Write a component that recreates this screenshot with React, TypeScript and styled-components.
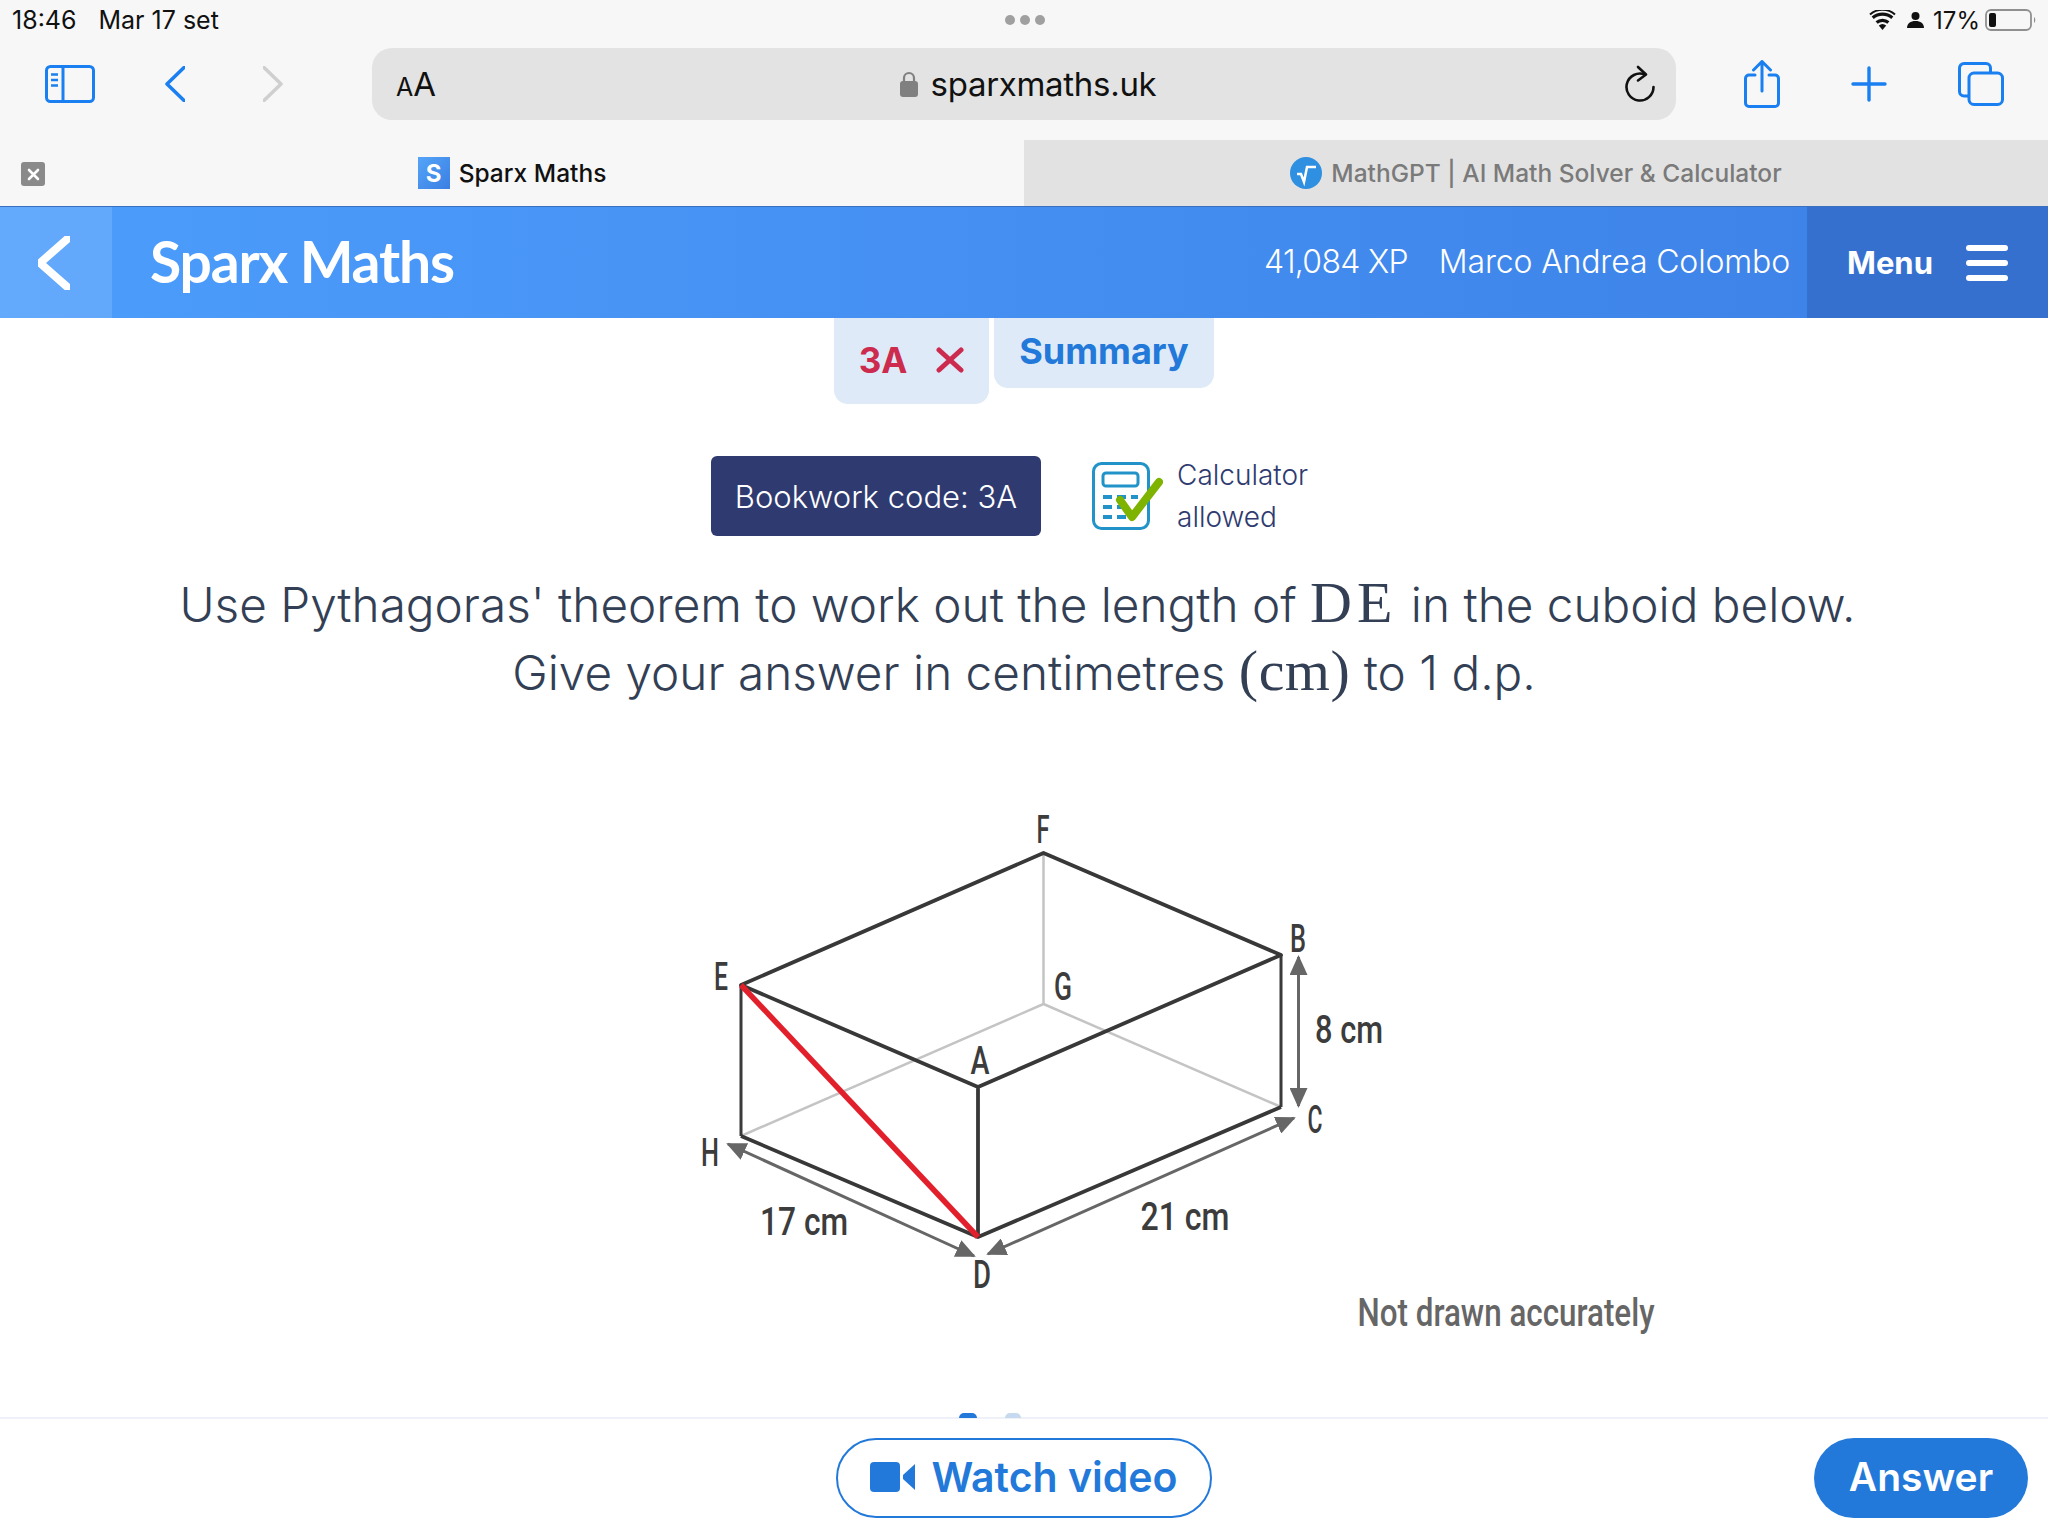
import React from "react";
import styled, { createGlobalStyle } from "styled-components";

const GlobalStyle = createGlobalStyle`
  html, body {
    margin: 0;
    padding: 0;
    background: #fff;
  }
  * {
    box-sizing: border-box;
  }
`;

const Page = styled.div`
  width: 2048px;
  height: 1536px;
  display: flex;
  flex-direction: column;
  overflow: hidden;
  font-family: "Inter", "Liberation Sans", sans-serif;
`;

const StatusBar = styled.div`
  height: 40px;
  background: #f7f7f7;
  display: grid;
  grid-template-columns: 1fr auto 1fr;
  align-items: center;
  padding: 0 11px 0 12px;
  color: #111;
  font-size: 25px;
`;

const StatusLeft = styled.div`
  display: flex;
  gap: 22px;
`;

const StatusRight = styled.div`
  display: flex;
  justify-content: flex-end;
  align-items: center;
`;

const Percent = styled.span`
  margin: 0 5px 0 9px;
  font-size: 24px;
`;

const Dots = styled.div`
  display: flex;
  gap: 5px;
`;

const Dot = styled.span`
  width: 10px;
  height: 10px;
  border-radius: 50%;
  background: #a0a0a0;
`;

const Toolbar = styled.div`
  height: 100px;
  background: #f7f7f7;
  display: flex;
  align-items: flex-start;
  padding: 8px 0 0 45px;
`;

const NavIcons = styled.div`
  width: 327px;
  height: 72px;
  display: grid;
  grid-template-columns: 50px 28px 20px;
  align-items: center;
  flex-shrink: 0;
  gap: 70px;
`;

const UrlBar = styled.div`
  width: 1304px;
  height: 72px;
  background: #e3e3e3;
  border-radius: 20px;
  display: grid;
  grid-template-columns: 1fr auto 1fr;
  align-items: center;
  padding: 0 20px 0 24px;
  color: #111;
`;

const ReaderLabel = styled.div`
  display: flex;
  align-items: baseline;
  font-size: 33px;
  & > small {
    font-size: 25px;
  }
`;

const Address = styled.div`
  display: flex;
  align-items: center;
  gap: 13px;
  margin-left: 4px;
  font-size: 33px;
  letter-spacing: -0.3px;
`;

const ReloadSlot = styled.div`
  display: flex;
  justify-content: flex-end;
`;

const ToolIcons = styled.div`
  display: flex;
  align-items: center;
  height: 72px;
  margin-left: 68px;
  gap: 71px;
`;

const TabBar = styled.div`
  height: 66px;
  display: grid;
  grid-template-columns: 1fr 1fr;
`;

const BrowserTab = styled.div<{ $active?: boolean }>`
  position: relative;
  display: flex;
  align-items: center;
  justify-content: center;
  gap: 9px;
  background: ${(p) => (p.$active ? "#f7f7f7" : "#e2e2e2")};
  color: ${(p) => (p.$active ? "#111" : "#7a7a7a")};
  font-size: 24.5px;
  font-weight: 500;
`;

const TabClose = styled.span`
  position: absolute;
  left: 21px;
  top: 22px;
  width: 24px;
  height: 24px;
  border-radius: 3px;
  background: #8a8a8a;
  color: #fff;
  display: flex;
  align-items: center;
  justify-content: center;
`;

const Favicon = styled.span`
  width: 32px;
  height: 32px;
  display: flex;
  align-items: center;
  justify-content: center;
  background: linear-gradient(135deg, #55a4f8, #3a7fe3);
  color: #fff;
  font-size: 24px;
  font-weight: 700;
`;

const Header = styled.header`
  height: 112px;
  display: flex;
  align-items: stretch;
  color: #fff;
  border-top: 1px solid #3a70c0;
  background: linear-gradient(90deg, #4c9dfc 0%, #3c80e6 100%);
`;

const BackPanel = styled.div`
  width: 112px;
  display: flex;
  align-items: center;
  justify-content: center;
  padding-right: 4px;
  background: rgba(255, 255, 255, 0.13);
`;

const Brand = styled.div`
  flex: 1;
  padding: 0 0 3px 38px;
  display: flex;
  align-items: center;
  font-family: "Lato", "Inter", sans-serif;
  font-size: 57px;
  font-weight: 700;
  letter-spacing: -1.2px;
`;

const UserInfo = styled.div`
  display: flex;
  align-items: center;
  gap: 31px;
  padding: 0 17px 2px 0;
  font-size: 32px;
  font-weight: 300;
  letter-spacing: -0.15px;
`;

const XpCount = styled.span`
  letter-spacing: -0.7px;
`;

const MenuPanel = styled.div`
  width: 241px;
  display: flex;
  align-items: center;
  gap: 33px;
  padding-left: 40px;
  background: #3670cf;
  font-size: 31px;
  font-weight: 700;
`;

const Burger = styled.div`
  width: 42px;
  display: flex;
  flex-direction: column;
  gap: 9px;
`;

const BurgerBar = styled.span`
  height: 6px;
  border-radius: 3px;
  background: #fff;
`;

const Main = styled.main`
  flex: 1;
  min-height: 0;
  display: flex;
  flex-direction: column;
  align-items: center;
  overflow: hidden;
  background: #fff;
`;

const PageTabs = styled.div`
  display: flex;
  align-items: flex-start;
  gap: 5px;
`;

const PageTab = styled.div<{ $height: number; $width: number }>`
  width: ${(p) => p.$width}px;
  height: ${(p) => p.$height}px;
  background: #deeaf7;
  border-radius: 0 0 14px 14px;
  display: flex;
  align-items: center;
  justify-content: center;
  font-weight: 700;
`;

const WrongTab = styled(PageTab)`
  color: #cc2b4e;
  font-size: 35px;
  gap: 29px;
  padding-bottom: 2px;
`;

const SummaryTab = styled(PageTab)`
  color: #2279d9;
  font-size: 36px;
  padding-bottom: 4px;
`;

const MetaRow = styled.div`
  margin-top: 50px;
  display: flex;
  align-items: center;
`;

const BookworkCode = styled.div`
  width: 330px;
  height: 80px;
  background: #2f3b70;
  border-radius: 6px;
  color: #fff;
  display: flex;
  align-items: center;
  justify-content: center;
  font-size: 31px;
  font-weight: 300;
`;

const CalcIcon = styled.svg`
  margin-left: 51px;
`;

const CalcText = styled.div`
  margin-left: 14px;
  width: 160px;
  color: #2f3b70;
  font-size: 28px;
  line-height: 42px;
  font-weight: 300;
`;

const Question = styled.div`
  margin-top: 33px;
  color: #333f55;
  font-size: 47.7px;
  font-weight: 300;
  text-align: center;
`;

const QuestionLine = styled.div<{ $shift?: number }>`
  height: 68px;
  line-height: 68px;
  padding-right: ${(p) => p.$shift ?? 0}px;
`;

const MathText = styled.span<{ $spread: number }>`
  font-family: "Liberation Serif", serif;
  font-size: 58px;
  line-height: 0;
  letter-spacing: ${(p) => p.$spread}px;
`;

const Figure = styled.svg`
  flex-shrink: 0;
  margin-top: 93px;
`;

const FigureLabel = styled.text`
  font-family: "Roboto", "Liberation Sans", sans-serif;
  font-weight: 500;
  fill: #3c3c3c;
  text-anchor: middle;
  dominant-baseline: central;
`;

const Footer = styled.footer`
  position: relative;
  height: 119px;
  border-top: 2px solid #eef1f8;
  background: #fff;
  display: flex;
  justify-content: center;
  padding-top: 19px;
`;

const CarouselDot = styled.span<{ $x: number; $color: string; $w: number }>`
  position: absolute;
  left: ${(p) => p.$x}px;
  top: -6px;
  width: ${(p) => p.$w}px;
  height: 5px;
  border-radius: 12px 12px 0 0;
  background: ${(p) => p.$color};
`;

const WatchButton = styled.button`
  width: 376px;
  height: 80px;
  padding-bottom: 4px;
  border: 2px solid #2279d9;
  border-radius: 40px;
  background: #fff;
  color: #2279d9;
  display: flex;
  align-items: center;
  justify-content: center;
  gap: 15px;
  font-family: "Inter", sans-serif;
  font-size: 41px;
  font-weight: 600;
`;

const AnswerButton = styled.button`
  position: absolute;
  left: 1814px;
  top: 19px;
  width: 214px;
  height: 80px;
  padding: 0 0 4px;
  border: none;
  border-radius: 40px;
  background: #2279d9;
  color: #fff;
  font-family: "Inter", sans-serif;
  font-size: 39px;
  font-weight: 600;
`;

const BLUE = "#1a7ff0";

function Chevron({ dir, color, w = 20, h = 36, sw = 3.5 }: { dir: "l" | "r"; color: string; w?: number; h?: number; sw?: number }) {
  const d = dir === "l" ? `M${w - 1} 1.5 L2 ${h / 2} L${w - 1} ${h - 1.5}` : `M1 1.5 L${w - 2} ${h / 2} L1 ${h - 1.5}`;
  return (
    <svg width={w} height={h} viewBox={`0 0 ${w} ${h}`} fill="none">
      <path d={d} stroke={color} strokeWidth={sw} strokeLinecap="round" strokeLinejoin="round" />
    </svg>
  );
}

function SidebarIcon() {
  return (
    <svg width="50" height="38" viewBox="0 0 50 38" fill="none" stroke={BLUE} strokeWidth="3">
      <rect x="1.5" y="1.5" width="47" height="35" rx="4" />
      <path d="M18 1.5V36.5" />
      <path d="M6 9.5H13M6 15H13M6 20.5H13" strokeWidth="2.4" />
    </svg>
  );
}

function ShareIcon() {
  return (
    <svg width="36" height="48" viewBox="0 0 36 48" fill="none" stroke={BLUE} strokeWidth="3" strokeLinecap="round" strokeLinejoin="round">
      <path d="M11 15H5a3.5 3.5 0 0 0-3.5 3.5V43a3.5 3.5 0 0 0 3.5 3.5h26a3.5 3.5 0 0 0 3.5-3.5V18.5a3.5 3.5 0 0 0-3.5-3.5H25" />
      <path d="M18 31V2M9.5 10L18 1.5 26.5 10" />
    </svg>
  );
}

function PlusIcon() {
  return (
    <svg width="36" height="36" viewBox="0 0 36 36" fill="none" stroke={BLUE} strokeWidth="3.4" strokeLinecap="round">
      <path d="M18 2V34M2 18H34" />
    </svg>
  );
}

function TabsIcon() {
  return (
    <svg width="46" height="44" viewBox="0 0 46 44" fill="none" stroke={BLUE} strokeWidth="3">
      <path d="M11 34H6a4.5 4.5 0 0 1-4.5-4.5V6A4.5 4.5 0 0 1 6 1.5h22A4.5 4.5 0 0 1 32.5 6v5" />
      <rect x="11" y="11" width="33.5" height="31.5" rx="5" />
    </svg>
  );
}

function ReloadIcon() {
  return (
    <svg width="32" height="38" viewBox="0 0 32 38" fill="none" stroke="#111" strokeWidth="2.6" strokeLinecap="round" strokeLinejoin="round">
      <path d="M21 9.5A13.5 13.5 0 1 0 29.5 22" />
      <path d="M14 2l8 7.5-8 6" />
    </svg>
  );
}

function LockIcon() {
  return (
    <svg width="18" height="26" viewBox="0 0 18 26">
      <path d="M4 11V7a5 5 0 0 1 10 0v4" fill="none" stroke="#808080" strokeWidth="2.2" />
      <rect x="0" y="10" width="18" height="16" rx="3" fill="#808080" />
    </svg>
  );
}

function WifiIcon() {
  return (
    <svg width="27" height="20" viewBox="0 0 27 20">
      <path d="M13.5 20l-3.7-4.4a5.6 5.6 0 0 1 7.4 0z" fill="#111" />
      <path d="M7.6 12.5a9 9 0 0 1 11.8 0M3.7 7.8a15 15 0 0 1 19.6 0" fill="none" stroke="#111" strokeWidth="3.2" />
      <path d="M1 4.5a19 19 0 0 1 25 0" fill="none" stroke="#111" strokeWidth="2" />
    </svg>
  );
}

function PersonIcon() {
  return (
    <svg width="17" height="16" viewBox="0 0 17 16" style={{ marginLeft: 11 }} fill="#111">
      <circle cx="8.5" cy="4" r="4" />
      <path d="M0 16c0-4.5 3.5-7 8.5-7s8.500 2.500 8.500 7z" />
    </svg>
  );
}

function BatteryIcon() {
  return (
    <svg width="52" height="22" viewBox="0 0 52 22">
      <rect x="1" y="1" width="45" height="20" rx="5" fill="none" stroke="#8f8f8f" strokeWidth="1.8" />
      <rect x="4" y="4" width="7" height="14" rx="2" fill="#111" />
      <path d="M49 8a4 4 0 0 1 0 6z" fill="#8f8f8f" />
    </svg>
  );
}

function CloseGlyph() {
  return (
    <svg width="13" height="13" viewBox="0 0 13 13" stroke="#fff" strokeWidth="2.6" strokeLinecap="round">
      <path d="M2 2L11 11M11 2L2 11" />
    </svg>
  );
}

function MathGptIcon() {
  return (
    <svg width="32" height="32" viewBox="0 0 32 32">
      <circle cx="16" cy="16" r="16" fill="#2f8fe0" />
      <path d="M7 17h4l3 8 3-15h9" fill="none" stroke="#fff" strokeWidth="2.5" />
    </svg>
  );
}

function WrongCross() {
  return (
    <svg width="28" height="26" viewBox="0 0 28 26" stroke="#cc2b4e" strokeWidth="5" strokeLinecap="round">
      <path d="M3 3L25 23M25 3L3 23" />
    </svg>
  );
}

function Calculator() {
  return (
    <CalcIcon width="71" height="68" viewBox="0 0 71 68" fill="none">
      <rect x="1.5" y="1.5" width="55" height="65" rx="8" stroke="#2293c9" strokeWidth="3" />
      <rect x="11" y="11" width="35" height="13" rx="3" stroke="#2293c9" strokeWidth="3" />
      <path d="M11 35H20M25 35H34M39 35H46M11 45H20M25 45H34M11 55H20M25 55H34" stroke="#2293c9" strokeWidth="4" />
      <path d="M28 38L40 55L67 20" stroke="#7eb300" strokeWidth="8" strokeLinecap="round" strokeLinejoin="round" />
    </CalcIcon>
  );
}

function Video() {
  return (
    <svg width="46" height="30" viewBox="0 0 46 30" fill="#2279d9">
      <rect width="30" height="30" rx="4" />
      <path d="M33 13L45 2V28L33 17z" />
    </svg>
  );
}

const LETTERS = [
  { t: "F", x: 1043, y: 830, w: 13 },
  { t: "B", x: 1298, y: 939, w: 16 },
  { t: "E", x: 721, y: 977, w: 14 },
  { t: "G", x: 1063, y: 987, w: 18 },
  { t: "A", x: 980, y: 1061, w: 19 },
  { t: "C", x: 1315, y: 1120, w: 15 },
  { t: "H", x: 710, y: 1153, w: 18 },
  { t: "D", x: 982, y: 1275, w: 18 },
  { t: "8 cm", x: 1349, y: 1030, w: 68 },
  { t: "17 cm", x: 804, y: 1222, w: 88 },
  { t: "21 cm", x: 1185, y: 1217, w: 89 },
];

function Cuboid() {
  return (
    <Figure width="1400" height="600" viewBox="324 800 1400 600">
      <defs>
        <marker id="head" markerWidth="20" markerHeight="18" refX="18" refY="9" orient="auto-start-reverse" markerUnits="userSpaceOnUse">
          <path d="M0 0L20 9L0 18z" fill="#666" />
        </marker>
      </defs>
      <g fill="none" strokeLinejoin="round">
        <path d="M1043.5 853V1004M1043.5 1004L741 1136M1043.5 1004L1281 1107" stroke="#c4c4c4" strokeWidth="2.5" />
        <path d="M741 985V1136M1281 955V1107" stroke="#3a3a3a" strokeWidth="3" />
        <path d="M741 985L1043.5 853L1281 955L978 1087zM978 1087V1237M741 1136L978 1237L1281 1107" stroke="#383838" strokeWidth="3.8" />
        <path d="M741 985L978 1237" stroke="#e2202c" strokeWidth="5.5" />
        <g stroke="#666" strokeWidth="3" markerStart="url(#head)" markerEnd="url(#head)">
          <path d="M1298.5 957V1106" />
          <path d="M988 1254L1294 1118" />
          <path d="M728 1144L974 1256" />
        </g>
      </g>
      <g fontSize="38">
        {LETTERS.map((l) => (
          <FigureLabel key={l.t} x={l.x} y={l.y} textLength={l.w} lengthAdjust="spacingAndGlyphs">
            {l.t}
          </FigureLabel>
        ))}
        <FigureLabel x="1506" y="1313" textLength="297" lengthAdjust="spacingAndGlyphs" style={{ fill: "#666" }}>
          Not drawn accurately
        </FigureLabel>
      </g>
    </Figure>
  );
}

export default function App() {
  return (
    <Page>
      <GlobalStyle />
      <StatusBar>
        <StatusLeft>
          <span>18:46</span>
          <span>Mar 17 set</span>
        </StatusLeft>
        <Dots>
          <Dot />
          <Dot />
          <Dot />
        </Dots>
        <StatusRight>
          <WifiIcon />
          <PersonIcon />
          <Percent>17%</Percent>
          <BatteryIcon />
        </StatusRight>
      </StatusBar>
      <Toolbar>
        <NavIcons>
          <SidebarIcon />
          <Chevron dir="l" color={BLUE} />
          <Chevron dir="r" color="#cfcfcf" />
        </NavIcons>
        <UrlBar>
          <ReaderLabel>
            <small>A</small>A
          </ReaderLabel>
          <Address>
            <LockIcon />
            sparxmaths.uk
          </Address>
          <ReloadSlot>
            <ReloadIcon />
          </ReloadSlot>
        </UrlBar>
        <ToolIcons>
          <ShareIcon />
          <PlusIcon />
          <TabsIcon />
        </ToolIcons>
      </Toolbar>
      <TabBar>
        <BrowserTab $active>
          <TabClose>
            <CloseGlyph />
          </TabClose>
          <Favicon>S</Favicon>
          Sparx Maths
        </BrowserTab>
        <BrowserTab>
          <MathGptIcon />
          MathGPT | AI Math Solver &amp; Calculator
        </BrowserTab>
      </TabBar>
      <Header>
        <BackPanel>
          <Chevron dir="l" color="#fff" w={32} h={54} sw={8} />
        </BackPanel>
        <Brand>Sparx Maths</Brand>
        <UserInfo>
          <XpCount>41,084 XP</XpCount>
          <span>Marco Andrea Colombo</span>
        </UserInfo>
        <MenuPanel>
          Menu
          <Burger>
            <BurgerBar />
            <BurgerBar />
            <BurgerBar />
          </Burger>
        </MenuPanel>
      </Header>
      <Main>
        <PageTabs>
          <WrongTab $width={155} $height={86}>
            3A
            <WrongCross />
          </WrongTab>
          <SummaryTab $width={220} $height={70}>
            Summary
          </SummaryTab>
        </PageTabs>
        <MetaRow>
          <BookworkCode>Bookwork code: 3A</BookworkCode>
          <Calculator />
          <CalcText>
            Calculator
            <br />
            allowed
          </CalcText>
        </MetaRow>
        <Question>
          <QuestionLine $shift={13}>
            Use Pythagoras' theorem to work out the length of <MathText $spread={5}>DE</MathText> in the cuboid below.
          </QuestionLine>
          <QuestionLine>
            Give your answer in centimetres <MathText $spread={0.5}>(cm)</MathText> to 1 d.p.
          </QuestionLine>
        </Question>
        <Cuboid />
      </Main>
      <Footer>
        <CarouselDot $x={959} $w={18} $color="#2279d9" />
        <CarouselDot $x={1005} $w={16} $color="#c7d9ee" />
        <WatchButton>
          <Video />
          Watch video
        </WatchButton>
        <AnswerButton>Answer</AnswerButton>
      </Footer>
    </Page>
  );
}
